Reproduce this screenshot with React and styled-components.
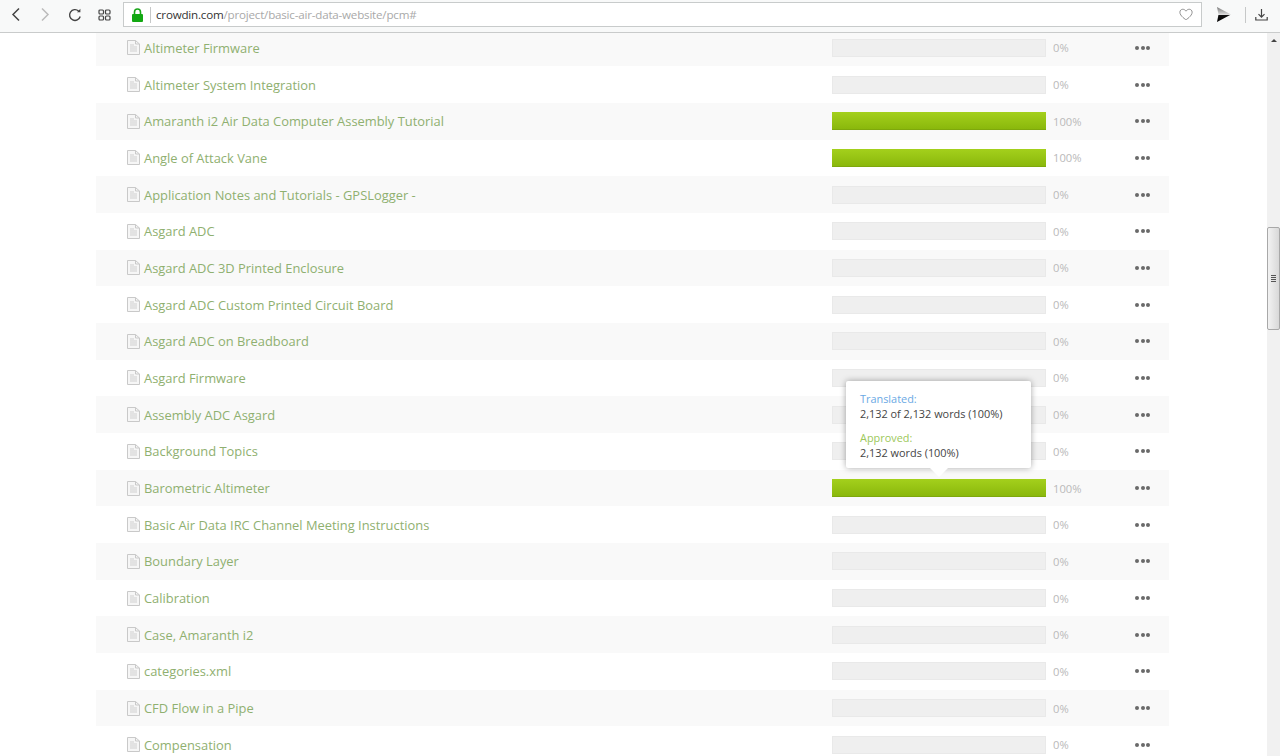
import React from "react";
import styled, { createGlobalStyle } from "styled-components";

const Global = createGlobalStyle`
  html, body { margin: 0; padding: 0; height: 100%; overflow: hidden; background: #fff; }
  body { font-family: "Open Sans", "Liberation Sans", sans-serif; }
`;

const Page = styled.div`
  height: 756px;
  display: flex;
  flex-direction: column;
  overflow: hidden;
`;

const Toolbar = styled.header`
  flex: 0 0 33px;
  box-sizing: border-box;
  display: flex;
  align-items: center;
  background: #f8f9f9;
  border-bottom: 1px solid #c9cbcb;
  padding: 0 0 3px 7px;
`;

const NavButton = styled.button`
  width: ${(p) => p.$w}px;
  height: 24px;
  padding: 0;
  border: 0;
  background: none;
  display: flex;
  align-items: center;
  justify-content: center;
  flex: none;
`;

const AddressBar = styled.div`
  flex: 0 0 1079px;
  height: 25px;
  box-sizing: border-box;
  background: #fff;
  border: 1px solid #c8cbcb;
  display: flex;
  align-items: center;
  padding: 0 8px;
  font-size: 11.6px;
  letter-spacing: -0.2px;
`;

const Divider = styled.span`
  flex: none;
  width: 1px;
  height: 16px;
  background: #c6c8c8;
  margin: 0 ${(p) => p.$right}px 0 ${(p) => p.$left}px;
`;

const Host = styled.span`
  color: #333;
`;

const UrlPath = styled.span`
  color: #a9a9a9;
  flex: 1;
`;

const Body = styled.div`
  flex: 1;
  min-height: 0;
  display: flex;
`;

const Content = styled.main`
  flex: 1;
  min-width: 0;
  padding-left: 96px;
  padding-right: 98px;
  overflow: hidden;
`;

const List = styled.div`
  display: grid;
  grid-auto-rows: 36.68px;
  margin-top: -3.4px;
`;

const Row = styled.div`
  display: flex;
  align-items: center;
  padding: 0 19px 0 31px;
  background: ${(p) => (p.$shaded ? "#f9f9f9" : "#fff")};
`;

const Name = styled.a`
  flex: 1;
  min-width: 0;
  display: flex;
  align-items: center;
  gap: 4px;
  font-size: 12.9px;
  color: #8fb070;
  & > svg { flex: none; }
`;

const BarWrap = styled.div`
  position: relative;
  flex: 0 0 214px;
  height: 18px;
`;

const Track = styled.div`
  height: 100%;
  box-sizing: border-box;
  background: #efefef;
  border: 1px solid #e9e9e9;
`;

const Fill = styled.div`
  height: 100%;
  background: linear-gradient(#a4d01c, #8ab80c);
  border-bottom: 1px solid #7ea80c;
  box-sizing: border-box;
`;

const Percent = styled.span`
  flex: 0 0 89px;
  box-sizing: border-box;
  padding-left: 7px;
  font-size: 11.2px;
  color: #b9b9b9;
`;

const Dots = styled.span`
  flex: 0 0 15px;
  display: flex;
  justify-content: space-between;
`;

const Dot = styled.i`
  width: 4px;
  height: 4px;
  border-radius: 50%;
  background: #6a6a6a;
`;

const Tooltip = styled.div`
  position: absolute;
  left: 14px;
  bottom: 29px;
  width: 185px;
  height: 87px;
  box-sizing: border-box;
  background: #fff;
  border-radius: 2px;
  box-shadow: 0 0 6px rgba(0, 0, 0, 0.35);
  padding: 10px 14px;
  font-size: 10.9px;
  line-height: 15px;
  color: #444;
  &::after {
    content: "";
    position: absolute;
    left: 84px;
    bottom: -9px;
    width: 0;
    height: 0;
    border-left: 9px solid transparent;
    border-right: 9px solid transparent;
    border-top: 9px solid #fff;
  }
`;

const TipLabel = styled.div`
  color: ${(p) => p.$color};
  margin-top: ${(p) => p.$gap || 0}px;
`;

const Scrollbar = styled.aside`
  flex: 0 0 13px;
  background: #f1f1f1;
  position: relative;
  display: flex;
  flex-direction: column;
  align-items: center;
`;

const ScrollArrow = styled.span`
  width: 0;
  height: 0;
  margin-top: 6px;
  border-left: 3px solid transparent;
  border-right: 3px solid transparent;
  border-bottom: 3px solid #444;
`;

const Thumb = styled.div`
  position: absolute;
  left: 0;
  right: 0;
  top: 194px;
  height: 103px;
  box-sizing: border-box;
  border: 1px solid #a8a8a8;
  border-radius: 2px;
  background: linear-gradient(90deg, #f2f2f2, #d8d8d8);
  display: flex;
  flex-direction: column;
  align-items: center;
  justify-content: center;
  gap: 1px;
`;

const Grip = styled.i`
  width: 5px;
  height: 1px;
  background: #555;
`;

const ToolbarEnd = styled.div`
  flex: 1;
  display: flex;
  align-items: center;
`;

const FileIcon = () => (
  <svg width="13" height="15" viewBox="0 0 13 15" fill="none">
    <path d="M1 .5h7.500L12.500 4v10.500H.5V.5z" fill="#f6f6f6" stroke="#c9c9c9" />
    <path d="M8.500.5V4h4" stroke="#c9c9c9" />
    <path d="M3 5h4M3 7h7M3 9h7M3 11h7" stroke="#cfcfcf" />
  </svg>
);

const rows = [
  ["Altimeter Firmware", 0],
  ["Altimeter System Integration", 0],
  ["Amaranth i2 Air Data Computer Assembly Tutorial", 100],
  ["Angle of Attack Vane", 100],
  ["Application Notes and Tutorials - GPSLogger -", 0],
  ["Asgard ADC", 0],
  ["Asgard ADC 3D Printed Enclosure", 0],
  ["Asgard ADC Custom Printed Circuit Board", 0],
  ["Asgard ADC on Breadboard", 0],
  ["Asgard Firmware", 0],
  ["Assembly ADC Asgard", 0],
  ["Background Topics", 0],
  ["Barometric Altimeter", 100, true],
  ["Basic Air Data IRC Channel Meeting Instructions", 0],
  ["Boundary Layer", 0],
  ["Calibration", 0],
  ["Case, Amaranth i2", 0],
  ["categories.xml", 0],
  ["CFD Flow in a Pipe", 0],
  ["Compensation", 0],
];

export default function App() {
  return (
    <Page>
      <Global />
      <Toolbar>
        <NavButton $w={18}>
          <svg width="10" height="15" viewBox="0 0 10 15" fill="none" stroke="#444" strokeWidth="1.5"><path d="M8 1.500 2 7.500l6 6" /></svg>
        </NavButton>
        <NavButton $w={40}>
          <svg width="10" height="15" viewBox="0 0 10 15" fill="none" stroke="#bbb" strokeWidth="1.5"><path d="m2 1.500 6 6-6 6" /></svg>
        </NavButton>
        <NavButton $w={20}>
          <svg width="14" height="14" viewBox="0 0 14 14" fill="none" stroke="#444" strokeWidth="1.4">
            <path d="M12.200 8.500A5.400 5.400 0 1 1 10.600 3" />
            <path d="M12.400.8v3.400H9" fill="#444" stroke="none" />
          </svg>
        </NavButton>
        <NavButton $w={38}>
          <svg width="13" height="12" viewBox="0 0 13 12" fill="none" stroke="#444" strokeWidth="1.2">
            <rect x="1" y="1" width="4.500" height="4" rx="1" />
            <rect x="7.500" y="1" width="4.500" height="4" rx="1" />
            <rect x="1" y="7" width="4.500" height="4" rx="1" />
            <rect x="7.500" y="7" width="4.500" height="4" rx="1" />
          </svg>
        </NavButton>
        <AddressBar>
          <svg width="11" height="14" viewBox="0 0 11 14" style={{ flex: "none" }}>
            <path d="M2.500 6V4a3 3 0 0 1 6 0v2" fill="none" stroke="#1aa51a" strokeWidth="1.6" />
            <rect x="0" y="6" width="11" height="8" rx="1" fill="#12a812" />
          </svg>
          <Divider $left={7} $right={5} />
          <Host>crowdin.com</Host>
          <UrlPath>/project/basic-air-data-website/pcm#</UrlPath>
          <svg width="14" height="13" viewBox="0 0 16 14" fill="none" stroke="#8d8d8d" strokeWidth="1.100">
            <path d="M8 13S1 8.800 1 4.400C1 2.400 2.500 1 4.300 1 5.800 1 7.200 1.900 8 3.200 8.800 1.900 10.200 1 11.700 1 13.500 1 15 2.400 15 4.400 15 8.800 8 13 8 13z" />
          </svg>
        </AddressBar>
        <ToolbarEnd>
          <NavButton $w={42}>
            <svg width="15" height="15" viewBox="0 0 15 15">
              <defs>
                <linearGradient id="fl" x1="0" y1="0" x2="0" y2="1">
                  <stop offset="0" stopColor="#777" />
                  <stop offset="0.5" stopColor="#ddd" />
                  <stop offset="0.55" stopColor="#111" />
                  <stop offset="1" stopColor="#000" />
                </linearGradient>
              </defs>
              <path d="M1 0l14 7.500L1 15l1.500-7.500z" fill="url(#fl)" />
            </svg>
          </NavButton>
          <Divider $left={1} $right={3} />
          <NavButton $w={24}>
            <svg width="13" height="13" viewBox="0 0 13 13" fill="none" stroke="#444" strokeWidth="1.2">
              <path d="M6.500 1v8M3.500 6.200l3 3 3-3M.8 9v3h11.400V9" />
            </svg>
          </NavButton>
        </ToolbarEnd>
      </Toolbar>
      <Body>
        <Content>
          <List>
            {rows.map(([name, pct, tip], i) => (
              <Row key={name} $shaded={i % 2 === 0}>
                <Name>
                  <FileIcon />
                  {name}
                </Name>
                <BarWrap>
                  {pct === 100 ? <Fill /> : <Track />}
                  {tip && (
                    <Tooltip>
                      <TipLabel $color="#6aa9e4">Translated:</TipLabel>
                      <div>2,132 of 2,132 words (100%)</div>
                      <TipLabel $color="#9cc85a" $gap={9}>Approved:</TipLabel>
                      <div>2,132 words (100%)</div>
                    </Tooltip>
                  )}
                </BarWrap>
                <Percent>{pct}%</Percent>
                <Dots>
                  <Dot />
                  <Dot />
                  <Dot />
                </Dots>
              </Row>
            ))}
          </List>
        </Content>
        <Scrollbar>
          <ScrollArrow />
          <Thumb>
            <Grip />
            <Grip />
            <Grip />
            <Grip />
          </Thumb>
        </Scrollbar>
      </Body>
    </Page>
  );
}
